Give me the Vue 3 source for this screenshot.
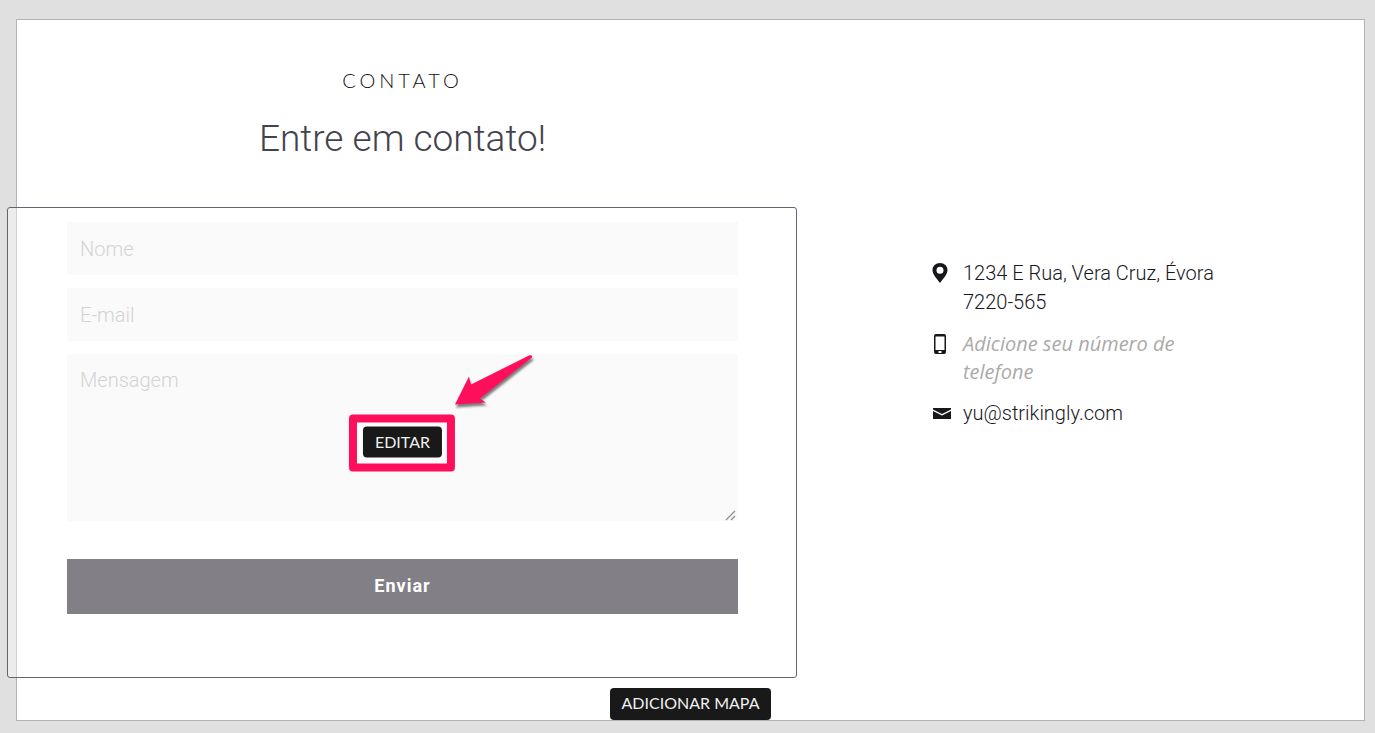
<script setup>
import { ref } from 'vue'

const name = ref('')
const email = ref('')
const message = ref('')
</script>

<template>
  <main class="page">
    <section class="contact">
      <div class="columns">
        <div class="main">
          <header class="heading">
            <h2 class="kicker">CONTATO</h2>
            <h1 class="title">Entre em contato!</h1>
          </header>
          <div class="editor">
            <form class="form" @submit.prevent>
              <input v-model="name" class="field" type="text" placeholder="Nome" aria-label="Nome" />
              <input v-model="email" class="field" type="email" placeholder="E-mail" aria-label="E-mail" />
              <div class="area-wrap">
                <textarea v-model="message" class="field area" placeholder="Mensagem" aria-label="Mensagem"></textarea>
                <svg class="grip" viewBox="0 0 12 12" width="12" height="12" aria-hidden="true">
                  <path d="M1 11L10 2M6 11L10 7" fill="none" stroke="#919191" stroke-width="1.400" />
                </svg>
              </div>
              <button class="send" type="submit">Enviar</button>
            </form>
            <div class="highlight">
              <button class="tool" type="button">EDITAR</button>
              <svg class="arrow" viewBox="0 0 84 58" width="84" height="58" aria-hidden="true">
                <path d="M2 52 L16 24 L18 32 L76 3 Q80 2 79 5 L27 46 L33 50 Z" fill="#ff0f5b" />
              </svg>
            </div>
          </div>
        </div>

        <address class="info">
          <div class="row">
            <svg class="icon" viewBox="0 0 20 24" width="20" height="24" aria-hidden="true">
              <path fill="#17171c" fill-rule="evenodd" d="M8 2C3.700 2 .5 5 .5 9.200C.5 13.500 4.500 17 8 22C11.500 17 15.500 13.500 15.500 9.200C15.500 5 12.300 2 8 2ZM8 5.700A3.500 3.500 0 1 1 8 12.700A3.500 3.500 0 0 1 8 5.700Z" />
            </svg>
            <span>1234 E Rua, Vera Cruz, Évora 7220-565</span>
          </div>
          <div class="row">
            <svg class="icon" viewBox="0 0 20 24" width="20" height="24" aria-hidden="true">
              <path fill="#17171c" fill-rule="evenodd" d="M4 2H12Q14 2 14 4V20Q14 22 12 22H4Q2 22 2 20V4Q2 2 4 2ZM3.500 4.500V18H12.500V4.500ZM6.500 19V21H9.500V19Z" />
            </svg>
            <em class="hint">Adicione seu número de telefone</em>
          </div>
          <div class="row">
            <svg class="icon" viewBox="0 0 20 24" width="20" height="24" aria-hidden="true">
              <path fill="#17171c" d="M1 7H19V8.500L10 13L1 8.500ZM1 10L10 14.500L19 10V18H1Z" />
            </svg>
            <a class="mail" href="mailto:yu@strikingly.com">yu@strikingly.com</a>
          </div>
        </address>
      </div>
      <button class="tool map" type="button">ADICIONAR MAPA</button>
    </section>
  </main>
</template>

<style>
body {
  background: #e0e0e0;
}
</style>

<style scoped>
.page {
  padding: 19px 10px 12px 16px;
  font-family: Roboto, "Liberation Sans", sans-serif;
  font-weight: 300;
}
.contact {
  display: flex;
  flex-direction: column;
  align-items: center;
  background: #fff;
  border: 1px solid #b3b3b7;
}
.columns {
  box-sizing: border-box;
  width: 100%;
  padding: 47px 50px 0;
  display: grid;
  grid-template-columns: 671fr 382fr;
  gap: 194px;
}
.heading {
  text-align: center;
}
.kicker {
  margin: 0;
  font: 300 20px/26px Lato, sans-serif;
  letter-spacing: 4px;
  color: #111;
}
.title {
  margin: 22px 0 0;
  font-size: 37px;
  line-height: 48px;
  font-weight: 300;
  color: #43434f;
}
.editor {
  position: relative;
  margin: 44px -59px 0 -60px;
  padding: 14px 58px 63px 59px;
  border: 1px solid #656370;
  border-radius: 3px;
  background: rgba(255, 255, 255, 0.4);
}
.form {
  display: flex;
  flex-direction: column;
  gap: 13px;
}
.field {
  display: block;
  box-sizing: border-box;
  width: 100%;
  height: 53px;
  padding: 12px 13px;
  border: 0;
  border-radius: 0;
  outline: 0;
  background: #fafafa;
  font: 300 20px/28px Roboto, sans-serif;
  color: #43434f;
}
.field::placeholder {
  color: #d3d3d5;
  opacity: 1;
}
.area-wrap {
  position: relative;
}
.area {
  height: 167px;
  resize: none;
}
.grip {
  position: absolute;
  right: 1px;
  bottom: 0;
}
.send {
  height: 55px;
  margin-top: 25px;
  padding: 0 0 2px;
  border: 0;
  background: #828086;
  color: #fff;
  font: 700 18px/24px Roboto, sans-serif;
  letter-spacing: 1px;
}
.highlight {
  position: absolute;
  top: 50%;
  left: 50%;
  transform: translate(-50%, -50%);
  padding: 4px 5px 6px 6px;
  border: 8px solid #ff0f5b;
  border-radius: 4px;
  background: #fdfdfd;
}
.arrow {
  position: absolute;
  left: 96px;
  bottom: 53px;
  filter: drop-shadow(1px 3px 1px rgba(0, 0, 0, 0.5));
}
.tool {
  display: block;
  padding: 3px 12px 5px;
  border: 0;
  border-radius: 4px;
  background: #191919;
  color: #f0f0f0;
  font: 400 16px/23px Lato, sans-serif;
}
.map {
  margin-top: 10px;
  line-height: 24px;
}
.info {
  padding: 192px 80px 0 0;
  font-style: normal;
  font-size: 20px;
  line-height: 29px;
  color: #17171c;
}
.row {
  display: flex;
  gap: 11px;
  margin-bottom: 13px;
}
.icon {
  flex: none;
  margin-top: 2px;
}
.hint {
  font: italic 400 20px/28px "Open Sans", sans-serif;
  color: #aaa;
}
.mail {
  color: inherit;
  text-decoration: none;
}
</style>
